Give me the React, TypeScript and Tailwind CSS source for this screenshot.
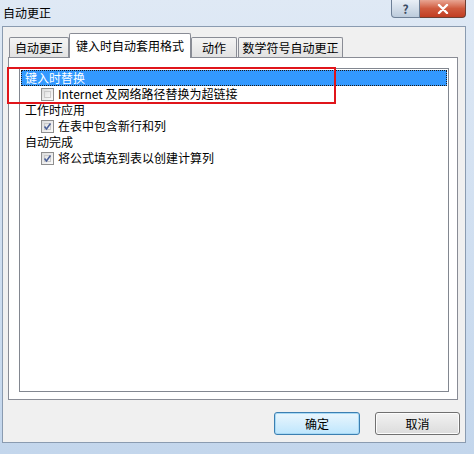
import React from 'react';

const font = { fontFamily: '"Microsoft YaHei", "Noto Sans CJK SC", "Liberation Sans", sans-serif' };

function Check({ checked }: { checked: boolean }) {
  return (
    <span className="relative flex h-[13px] w-[13px] items-center justify-center border border-[#8f8f8f] bg-gradient-to-br from-[#dcdcdc] to-[#fbfbfb]">
      <span className="absolute inset-[2px] border border-[#c9c9c9] bg-gradient-to-br from-[#e2e2e2] to-[#f6f6f6]" />
      {checked && (
        <svg viewBox="0 0 13 13" className="relative h-[13px] w-[13px]">
          <path d="M3 6.5 L5.3 9.5 L10 3" fill="none" stroke="#4a5f97" strokeWidth="1.8" />
        </svg>
      )}
    </span>
  );
}

function Row({ children, selected, indent }: { children: React.ReactNode; selected?: boolean; indent?: boolean }) {
  return (
    <div
      className={`flex h-[16px] items-center text-[12px] leading-none ${
        selected ? 'bg-[#3399ff] text-white outline outline-1 outline-dotted outline-[#1b1b1b] -outline-offset-1' : 'text-black'
      } ${indent ? 'pl-[20px]' : 'pl-[4px]'}`}
    >
      {children}
    </div>
  );
}

function Tab({ label, active, w, ml }: { label: string; active?: boolean; w: string; ml?: string }) {
  if (active) {
    return (
      <div className={`relative z-10 -mb-px flex h-[25px] ${w} items-center justify-center rounded-t-[2px] border border-b-0 border-[#898c95] bg-white text-[12px]`}>
        {label}
      </div>
    );
  }
  return (
    <div className={`mt-[4px] flex h-[20px] ${w} ${ml ?? ''} items-center justify-center rounded-t-[2px] border border-b-0 border-[#898c95] bg-gradient-to-b from-[#f4f4f4] to-[#e2e2e2] text-[12px]`}>
      {label}
    </div>
  );
}

export default function App() {
  return (
    <div className="relative h-[454px] w-[474px] overflow-hidden bg-gradient-to-b from-[#dfe9f5] to-[#c3d6ec] text-black" style={font}>
      {/* title bar */}
      <div className="flex h-[26px] items-start justify-between">
        <span className="pl-[3px] pt-[5px] text-[12px] leading-[16px] text-black">自动更正</span>
        <div className="mr-[8px] flex h-[18px]">
          <div className="flex w-[29px] items-center justify-center rounded-bl-[4px] border border-t-0 border-[#6d7f96] bg-gradient-to-b from-[#e9eff6] to-[#bccbdc] text-[12px] font-bold text-[#3b4b63]">
            ?
          </div>
          <div className="flex w-[46px] items-center justify-center rounded-br-[4px] border border-l-0 border-t-0 border-[#6d3f33] bg-gradient-to-b from-[#e8a593] via-[#cf5a3e] to-[#c13d22]">
            <svg viewBox="0 0 12 10" className="h-[10px] w-[12px]">
              <path d="M2 1 L10 9 M10 1 L2 9" stroke="#fff" strokeWidth="2.4" strokeLinecap="round" />
            </svg>
          </div>
        </div>
      </div>

      {/* client area */}
      <div className="ml-[2px] flex h-[417px] w-[464px] flex-col border border-[#8a9bb0] bg-[#f0f0f0] pl-[5px] pt-[6px]">
        <div className="flex items-end pl-[1px]">
          <Tab label="自动更正" w="w-[60px]" />
          <Tab label="键入时自动套用格式" active w="w-[122px]" />
          <Tab label="动作" w="w-[46px]" />
          <Tab label="数学符号自动更正" w="w-[105px]" ml="ml-px" />
        </div>
        <div className="flex h-[343px] w-[450px] flex-col border border-[#898c95] bg-white pb-[7px] pl-[10px] pr-[8px] pt-[10px]">
          <div className="flex-1 border border-[#828790] bg-white p-px">
            <Row selected>键入时替换</Row>
            <Row indent>
              <Check checked={false} />
              <span className="ml-[4px]">Internet 及网络路径替换为超链接</span>
            </Row>
            <Row>工作时应用</Row>
            <Row indent>
              <Check checked />
              <span className="ml-[4px]">在表中包含新行和列</span>
            </Row>
            <Row>自动完成</Row>
            <Row indent>
              <Check checked />
              <span className="ml-[4px]">将公式填充到表以创建计算列</span>
            </Row>
          </div>
        </div>
        <div className="mt-[12px] flex justify-end gap-[15px] pr-[5px]">
          <button className="h-[23px] w-[86px] rounded-[3px] border border-[#3c7fb1] bg-gradient-to-b from-[#eaf6fd] to-[#bee6fd] text-[12px] shadow-[inset_0_0_0_1px_#a7d9f5]">
            确定
          </button>
          <button className="h-[23px] w-[85px] rounded-[3px] border border-[#707070] bg-gradient-to-b from-[#f2f2f2] to-[#dcdcdc] text-[12px] shadow-[inset_0_0_0_1px_#fcfcfc]">
            取消
          </button>
        </div>
      </div>

      {/* red annotation */}
      <div className="pointer-events-none absolute left-[7px] top-[67px] h-[37px] w-[329px] border-2 border-[#e0151b]" />
    </div>
  );
}
